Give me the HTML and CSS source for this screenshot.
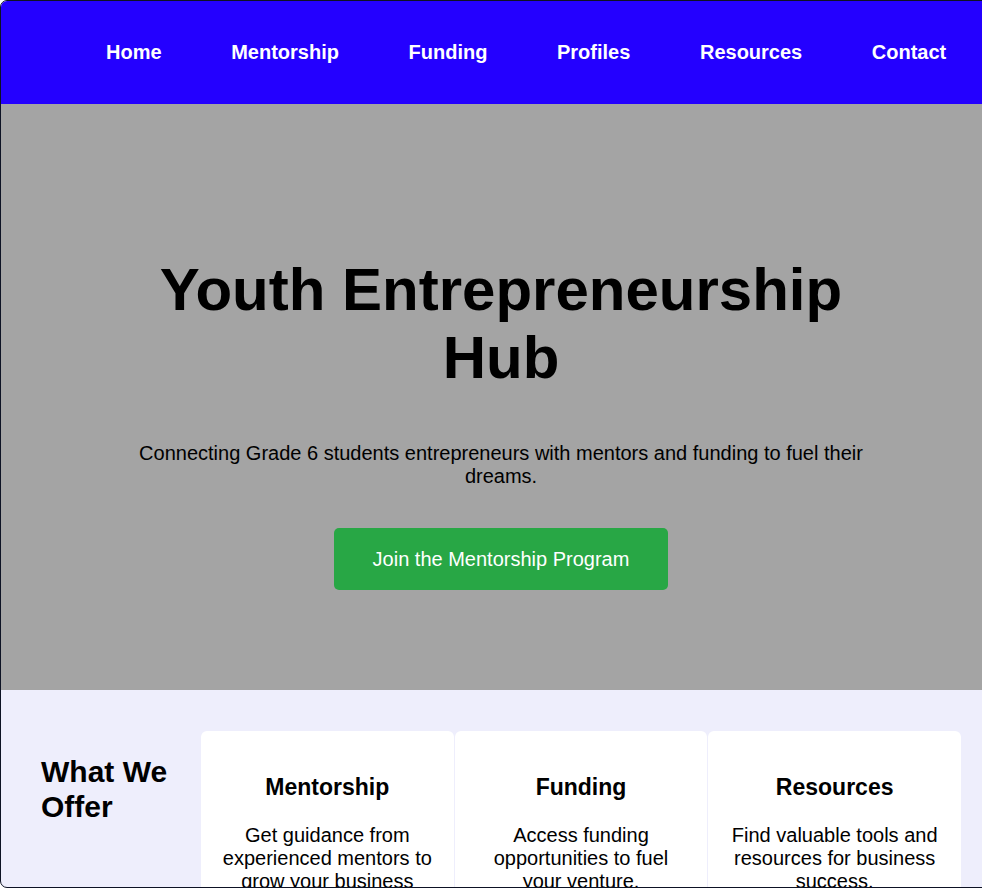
FILE: index.html
```html
<!DOCTYPE html>
<html lang="en">
<head>
<meta charset="utf-8">
<title>Youth Entrepreneurship Hub</title>
<link rel="stylesheet" href="styles.css">
</head>
<body>
<div class="frame">
  <header class="nav">
    <a href="#" class="nav-link">Home</a>
    <a href="#" class="nav-link">Mentorship</a>
    <a href="#" class="nav-link">Funding</a>
    <a href="#" class="nav-link">Profiles</a>
    <a href="#" class="nav-link">Resources</a>
    <a href="#" class="nav-link">Contact</a>
  </header>
  <section class="hero">
    <h1 class="hero-title">Youth Entrepreneurship Hub</h1>
    <p class="hero-text">Connecting Grade 6 students entrepreneurs with mentors and funding to fuel their dreams.</p>
    <a href="#" class="hero-btn">Join the Mentorship Program</a>
  </section>
  <section class="offer">
    <h2 class="offer-title">What We Offer</h2>
    <div class="card">
      <h3 class="card-title">Mentorship</h3>
      <p class="card-text">Get guidance from experienced mentors to grow your business ideas.</p>
    </div>
    <div class="card">
      <h3 class="card-title">Funding</h3>
      <p class="card-text">Access funding opportunities to fuel your venture.</p>
    </div>
    <div class="card">
      <h3 class="card-title">Resources</h3>
      <p class="card-text">Find valuable tools and resources for business success.</p>
    </div>
  </section>
</div>
</body>
</html>
```
FILE: styles.css
```css
html, body {
  margin: 0;
  padding: 0;
  overflow: hidden;
  background: #ffffff;
}

body {
  font-family: "Liberation Sans", Arial, sans-serif;
  color: #000;
}

.frame {
  width: 1002px;
  height: 888px;
  box-sizing: border-box;
  border: 1px solid #0d1224;
  border-radius: 7px;
  overflow: hidden;
  background: #eeeefc;
}

.nav {
  display: flex;
  align-items: center;
  height: 103px;
  padding-left: 105px;
  gap: 69.6px;
  background: #2400ff;
}

.nav-link {
  color: #ffffff;
  font-weight: bold;
  font-size: 20px;
  line-height: 23px;
  text-decoration: none;
}

.hero {
  background: #a4a4a4;
  text-align: center;
  padding: 152px 0 100px;
}

.hero-title {
  margin: 0 auto;
  max-width: 760px;
  font-size: 60px;
  line-height: 68px;
  font-weight: bold;
}

.hero-text {
  margin: 50px auto 0;
  max-width: 760px;
  font-size: 20px;
  line-height: 23px;
}

.hero-btn {
  display: inline-block;
  margin-top: 40px;
  padding: 20px 39px;
  font-size: 20px;
  line-height: 22px;
  color: #ffffff;
  background: #28a745;
  border-radius: 5px;
  text-decoration: none;
}

.offer {
  display: grid;
  grid-template-columns: 159px repeat(3, 1fr);
  column-gap: 1px;
  align-items: start;
  padding: 41px 40px 40px;
}

.offer-title {
  margin: 24px 0 0;
  font-size: 30px;
  line-height: 34.5px;
  font-weight: bold;
}

.card {
  background: #ffffff;
  border-radius: 6px;
  padding: 20px;
  text-align: center;
}

.card-title {
  margin: 23px 0;
  font-size: 23px;
  line-height: 26.5px;
  font-weight: bold;
}

.card-text {
  margin: 0;
  font-size: 20px;
  line-height: 23px;
}
```
